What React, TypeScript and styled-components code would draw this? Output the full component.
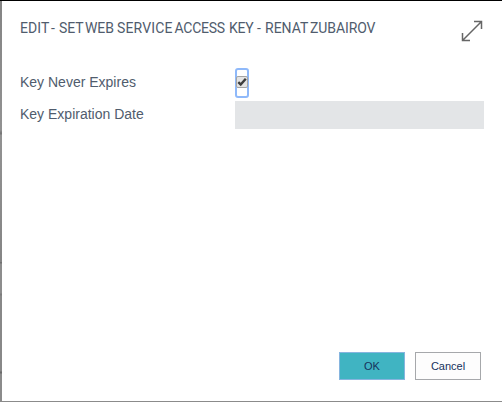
import React from 'react';
import styled, { createGlobalStyle } from 'styled-components';

const GlobalStyle = createGlobalStyle`
  *, *::before, *::after { box-sizing: border-box; }
  body { margin: 0; overflow: hidden; font-family: "Liberation Sans", Arial, sans-serif; }
`;

const Backdrop = styled.div`
  width: 502px;
  height: 402px;
  padding: 1px 0 1px 2px;
  background: linear-gradient(#000 0 1px, #848484 1px, #929292 130px, #777 133px 134px, #929292 135px, #858585 262px, #707070 262px 263px, #8d8d8d 264px 293px, #7c7c7c 294px 295px, #888 296px 371px, #6a6a6a 372px 373px, #8b8b8b 374px);
`;

const Dialog = styled.section`
  display: flex;
  flex-direction: column;
  height: 400px;
  padding: 19px 18px 21px;
  background: #fff;
  color: #505c6d;
`;

const Header = styled.header`
  display: flex;
  justify-content: space-between;
  height: 49px;
`;

const Title = styled.h1`
  display: flex;
  margin: 0;
  font: 400 14px/17px Roboto, sans-serif;
  white-space: pre;
`;

const Word = styled.span<{ $width: number; $tracking?: number }>`
  width: ${p => p.$width}px;
  letter-spacing: ${p => p.$tracking ?? 0}px;
`;

const ExpandIcon = styled.svg`
  width: 22px;
  height: 22px;
  margin-right: 1px;
  fill: none;
  stroke: #666;
  stroke-width: 1.5;
`;

const Fields = styled.div`
  display: grid;
  grid-template-columns: 215px 249px;
  grid-auto-rows: 28px;
  row-gap: 4px;
  flex: 1;
`;

const Label = styled.label`
  font-size: 14px;
  line-height: 27px;
`;

const CheckFrame = styled.div`
  display: flex;
  width: 14px;
  height: 30px;
  margin-top: -1px;
  padding-top: 6px;
  border: 2px solid #8fb9fa;
  border-radius: 3px;
`;

const CheckBox = styled.svg`
  flex: none;
  width: 12px;
  height: 12px;
  margin-left: -1px;
`;

const DateField = styled.div`
  height: 28px;
  background: #e3e5e7;
`;

const Actions = styled.footer`
  display: flex;
  justify-content: flex-end;
  gap: 10px;
  padding-right: 3px;
`;

const Button = styled.button<{ $primary?: boolean }>`
  width: 66px;
  height: 28px;
  padding: 0;
  border: 1px solid ${p => (p.$primary ? '#86b5df' : '#a6a8ab')};
  border-radius: 0;
  background: ${p => (p.$primary ? '#40b4c2' : '#fdfdfd')};
  color: #16325c;
  font: 11px/26px "Liberation Sans", Arial, sans-serif;
`;

const titleWords = [
  { text: 'EDIT', width: 31, tracking: 0.1 },
  { text: '-', width: 8, tracking: 0 },
  { text: 'SET', width: 26, tracking: -0.1 },
  { text: 'WEB', width: 32, tracking: -0.1 },
  { text: 'SERVICE', width: 57.5, tracking: 0.15 },
  { text: 'ACCESS', width: 54.5, tracking: -0.25 },
  { text: 'KEY', width: 28, tracking: -0.3 },
  { text: '-', width: 8, tracking: 0 },
  { text: 'RENAT', width: 45, tracking: 0 },
  { text: 'ZUBAIROV', width: 65, tracking: -0.1 },
];

export default function App() {
  return (
    <>
      <GlobalStyle />
      <Backdrop>
        <Dialog>
          <Header>
            <Title>
              {titleWords.map((word, i) => (
                <Word key={i} $width={word.width} $tracking={word.tracking}>{word.text}</Word>
              ))}
            </Title>
            <ExpandIcon viewBox="0 0 22 22" aria-label="Expand">
              <path d="M1.5 20.5 20.5 1.5M13 1.5h7.5V9M1.5 13v7.5H9" />
            </ExpandIcon>
          </Header>
          <Fields>
            <Label>Key Never Expires</Label>
            <CheckFrame role="checkbox" aria-checked="true">
              <CheckBox viewBox="0 0 12 12">
                <rect x=".5" y=".5" width="11" height="11" rx="1.5" fill="#e4e4e4" stroke="#a4a4a4" />
                <path d="M2.3 6.2 4.7 8.6 9.8 2.7" fill="none" stroke="#3d3d3d" strokeWidth="2.4" />
              </CheckBox>
            </CheckFrame>
            <Label>Key Expiration Date</Label>
            <DateField />
          </Fields>
          <Actions>
            <Button $primary>OK</Button>
            <Button>Cancel</Button>
          </Actions>
        </Dialog>
      </Backdrop>
    </>
  );
}
